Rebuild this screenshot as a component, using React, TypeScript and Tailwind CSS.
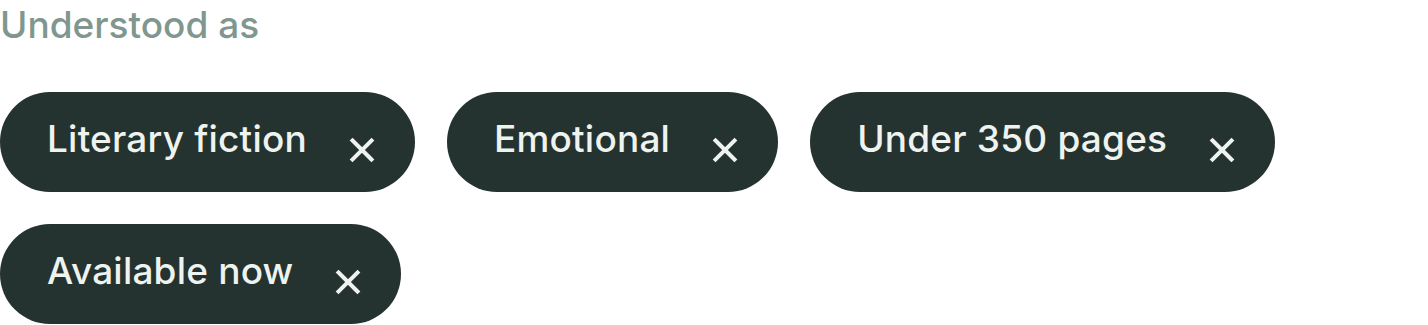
const chips = ["Literary fiction", "Emotional", "Under 350 pages", "Available now"];

function CloseIcon() {
  return (
    <svg width="26" height="26" viewBox="0 0 26 26" fill="none" className="mt-[23px] shrink-0">
      <path d="M3.5 3.5L22.5 22.5M22.5 3.5L3.5 22.5" stroke="#eef3ef" strokeWidth="4" strokeLinecap="square" />
    </svg>
  );
}

export default function App() {
  return (
    <div className="bg-white font-['Inter',sans-serif]">
      <div className="text-[37px] leading-[50px] font-medium text-[#809790]">Understood as</div>
      <div className="mt-[42px] flex flex-wrap gap-x-[32px] gap-y-[32px] w-[1300px]">
        {chips.map((c) => (
          <div key={c} className="flex h-[100px] items-start rounded-full bg-[#243230] pl-[47px] pr-[40px] pt-[22px]">
            <span className="text-[37px] leading-[50px] font-medium text-[#eef3ef] tracking-[0.2px]">{c}</span>
            <span className="ml-[42px]">
              <CloseIcon />
            </span>
          </div>
        ))}
      </div>
    </div>
  );
}
